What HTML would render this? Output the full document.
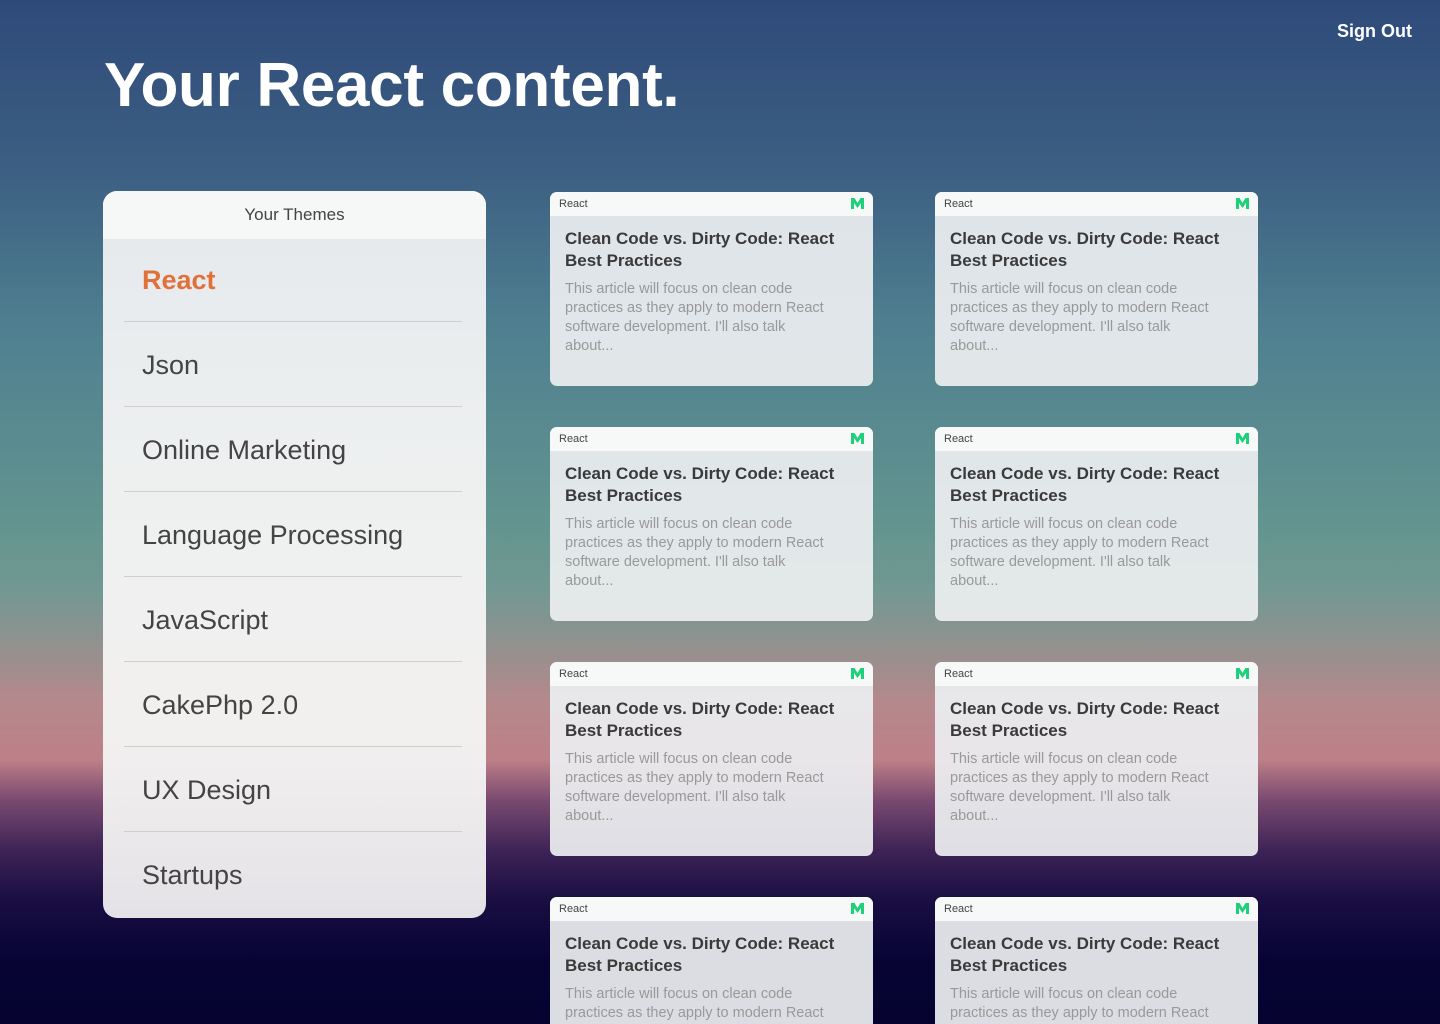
<!DOCTYPE html>
<html><head><meta charset="utf-8"><style>
*{margin:0;padding:0;box-sizing:border-box}
html,body{width:1440px;height:1024px;overflow:hidden}
html{background:#06032f}
body{font-family:"Liberation Sans",sans-serif;position:relative;
background:linear-gradient(180deg,#2e4a7a 0px,#3c5f82 170px,#4f8090 330px,#62948f 520px,#729892 590px,#8f928f 640px,#b4898c 700px,#bd7f88 760px,#7a4a70 800px,#3e2456 850px,#1a0e42 900px,#070434 960px,#06032f 1024px) no-repeat;}
.so{position:absolute;right:28px;top:21px;color:#fff;font-size:18px;font-weight:bold}
h1{position:absolute;left:104px;top:50px;color:#fff;font-size:62px;font-weight:bold;letter-spacing:-0.3px}
.side{position:absolute;left:103px;top:191px;width:383px;height:727px;border-radius:14px;overflow:hidden;background:linear-gradient(180deg,#e5e9ec,#eef0f0 40%,#f2f0ef 75%,#e4e2e6)}
.sh{height:48px;background:#f6f8f8;text-align:center;line-height:48px;font-size:17px;color:#444}
.it{margin:0 24px 0 21px;height:85px;border-bottom:1px solid #cfcfd2;font-size:27px;color:#444;padding-left:18px;line-height:86px}
.it.a{height:83px;line-height:82px}
.it:last-child{border-bottom:none}
.it.a{color:#e0713a;font-weight:bold}
.wrap{position:absolute;left:0;top:0;width:1440px;height:1024px;overflow:hidden}
.c{position:absolute;width:323px;height:194px;border-radius:7px;overflow:hidden;background:rgba(236,238,240,0.93)}
.ch{height:24px;background:#f7f8f8;font-size:11px;color:#444;padding:6px 9px;position:relative}
.ch svg{position:absolute;right:9px;top:6px}
.ct{margin:12px 15px 0;font-size:17px;font-weight:bold;color:#3a3a3a;line-height:22px}
.cd{margin:8px 15px 0;font-size:14.5px;color:#999;line-height:19px;white-space:nowrap}
</style></head><body>
<div class="so">Sign Out</div>
<h1>Your React content.</h1>
<div class="side"><div class="sh">Your Themes</div>
<div class="it a">React</div><div class="it">Json</div><div class="it">Online Marketing</div><div class="it">Language Processing</div><div class="it">JavaScript</div><div class="it">CakePhp 2.0</div><div class="it">UX Design</div><div class="it">Startups</div></div>
<div class="wrap" id="cards"></div>
<script>
var h='';[192,427,662,897].forEach(function(t){[550,935].forEach(function(l){h+='<div class="c" style="left:'+l+'px;top:'+t+'px"><div class="ch">React<svg width="13" height="11" viewBox="0 0 13 11"><path d="M0 0h3.5l3 5 3-5H13v11h-3V5L6.5 10 3 5v6H0z" fill="#1fd07a"/></svg></div><div class="ct">Clean Code vs. Dirty Code: React<br>Best Practices</div><div class="cd">This article will focus on clean code<br>practices as they apply to modern React<br>software development. I\'ll also talk<br>about...</div></div>';});});document.getElementById('cards').innerHTML=h;
</script>
</body></html>
